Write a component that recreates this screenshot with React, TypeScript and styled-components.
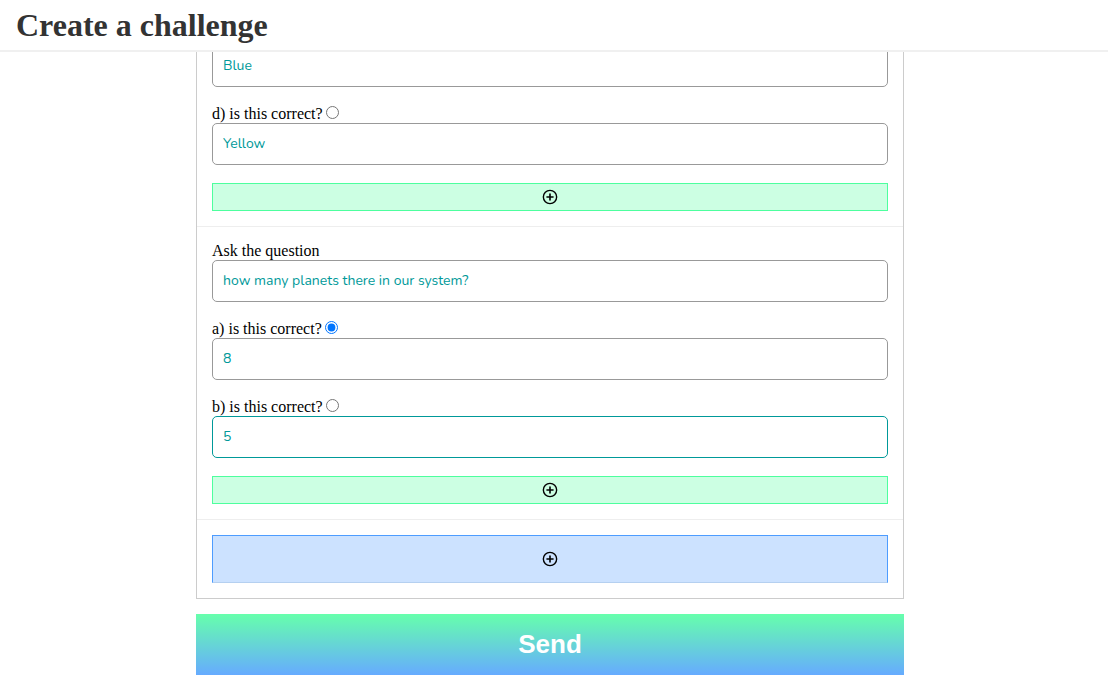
import React, { useId, useState } from "react";
import styled, { createGlobalStyle } from "styled-components";

const GlobalStyle = createGlobalStyle`
  * {
    box-sizing: border-box;
    margin: 0;
    padding: 0;
  }
  body {
    background: #fff;
    color: #000;
    font-family: "Liberation Serif", "Times New Roman", serif;
    font-size: 16px;
  }
`;

const Page = styled.div`
  display: flex;
  flex-direction: column;
  height: 100vh;
`;

const Header = styled.header`
  flex: none;
  padding: 7px 16px 6px;
  border-bottom: 2px solid #f0f0f0;
  background: #fff;
`;

const Title = styled.h1`
  color: #333;
  font-size: 32px;
  line-height: 37px;
`;

/* Reversed column: the form opens scrolled to its end. */
const Scroller = styled.main`
  flex: 1;
  min-height: 0;
  display: flex;
  flex-direction: column-reverse;
  overflow-y: auto;
  scrollbar-width: none;
  padding-right: 8px;
`;

const Form = styled.form`
  flex: none;
  display: flex;
  flex-direction: column;
  gap: 15px;
  width: 100%;
  max-width: 708px;
  margin: 0 auto;
  padding-bottom: 20px;
`;

const Panel = styled.div`
  border: 1px solid #ccc;
`;

const Section = styled.section`
  display: flex;
  flex-direction: column;
  gap: 18px;
  padding: 15px;

  & + & {
    border-top: 1px solid #eee;
  }
`;

const FieldGroup = styled.div`
  display: flex;
  flex-direction: column;
`;

const FieldHead = styled.div`
  display: flex;
  align-items: baseline;
  gap: 3px;
  line-height: 18px;
`;

const Radio = styled.input`
  width: 13px;
  height: 13px;
`;

const TextInput = styled.input`
  width: 100%;
  height: 42px;
  padding: 0 10px 2px;
  border: 1px solid #999;
  border-radius: 5px;
  outline: none;
  background: #fff;
  color: #099;
  font-family: "Nunito", "Noto Sans", sans-serif;
  font-size: 14px;

  &:focus {
    border-color: #099;
  }
`;

const AddButton = styled.button<{ $tone: "green" | "blue" }>`
  display: flex;
  align-items: center;
  justify-content: center;
  width: 100%;
  height: ${({ $tone }) => ($tone === "green" ? 28 : 48)}px;
  border: 1px solid ${({ $tone }) => ($tone === "green" ? "#4dff9e" : "#4d9cff")};
  border-bottom-color: ${({ $tone }) => ($tone === "green" ? "#4dff9e" : "#b5d0f0")};
  background: ${({ $tone }) => ($tone === "green" ? "#ccffe3" : "#cce2ff")};
  color: #000;
  cursor: pointer;
`;

const SendButton = styled.button`
  width: 100%;
  height: 61px;
  border: 0;
  background: linear-gradient(#66ffac, #66abff);
  color: #fff;
  font-family: "Liberation Sans", Arial, sans-serif;
  font-size: 26px;
  font-weight: 700;
  cursor: pointer;
`;

function PlusCircle() {
  return (
    <svg
      width="16"
      height="16"
      viewBox="0 0 16 16"
      fill="none"
      stroke="currentColor"
      strokeWidth="1.4"
      aria-hidden="true"
    >
      <circle cx="8" cy="8" r="6.65" />
      <path d="M8 5v6M5 8h6" strokeWidth="1.6" strokeLinecap="round" />
    </svg>
  );
}

interface FieldProps {
  label?: string;
  name?: string;
  value: string;
  group?: string;
  correct?: boolean;
  focused?: boolean;
}

function Field({ label, name, value, group, correct, focused }: FieldProps) {
  const id = useId();
  const [text, setText] = useState(value);
  return (
    <FieldGroup>
      {label && (
        <FieldHead>
          <label htmlFor={id}>{label}</label>
          {group && (
            <Radio type="radio" name={group} defaultChecked={correct} aria-label={label} />
          )}
        </FieldHead>
      )}
      <TextInput
        id={id}
        type="text"
        aria-label={name}
        value={text}
        autoFocus={focused}
        onChange={(e) => setText(e.target.value)}
      />
    </FieldGroup>
  );
}

export default function App() {
  return (
    <Page>
      <GlobalStyle />
      <Header>
        <Title>Create a challenge</Title>
      </Header>
      <Scroller>
        <Form onSubmit={(e) => e.preventDefault()}>
          <Panel>
            <Section>
              <Field name="Answer c" value="Blue" />
              <Field label="d) is this correct?" value="Yellow" group="question-1" />
              <AddButton type="button" $tone="green" aria-label="Add answer">
                <PlusCircle />
              </AddButton>
            </Section>
            <Section>
              <Field label="Ask the question" value="how many planets there in our system?" />
              <Field label="a) is this correct?" value="8" group="question-2" correct />
              <Field label="b) is this correct?" value="5" group="question-2" focused />
              <AddButton type="button" $tone="green" aria-label="Add answer">
                <PlusCircle />
              </AddButton>
            </Section>
            <Section>
              <AddButton type="button" $tone="blue" aria-label="Add question">
                <PlusCircle />
              </AddButton>
            </Section>
          </Panel>
          <SendButton type="submit">Send</SendButton>
        </Form>
      </Scroller>
    </Page>
  );
}
